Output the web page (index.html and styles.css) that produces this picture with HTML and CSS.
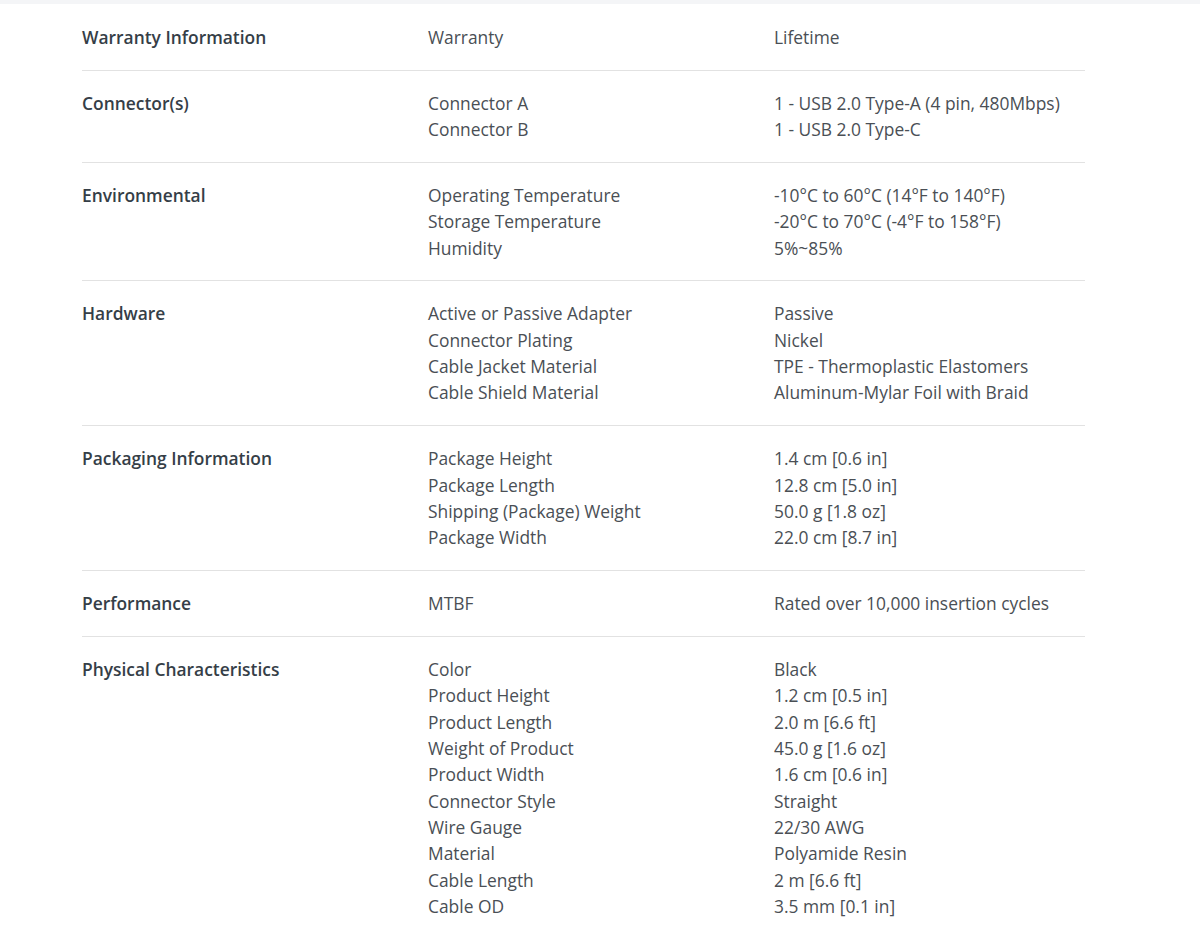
FILE: index.html
```html
<!DOCTYPE html>
<html>
<head>
<meta charset="utf-8">
<link rel="stylesheet" href="styles.css">
</head>
<body>
<div class="topband"></div>
<div class="specs">
  <div class="row">
    <div class="group">Warranty Information</div>
    <div class="names"><div>Warranty</div></div>
    <div class="vals"><div>Lifetime</div></div>
  </div>
  <div class="row">
    <div class="group">Connector(s)</div>
    <div class="names"><div>Connector A</div><div>Connector B</div></div>
    <div class="vals"><div>1 - USB 2.0 Type-A (4 pin, 480Mbps)</div><div>1 - USB 2.0 Type-C</div></div>
  </div>
  <div class="row">
    <div class="group">Environmental</div>
    <div class="names"><div>Operating Temperature</div><div>Storage Temperature</div><div>Humidity</div></div>
    <div class="vals"><div>-10°C to 60°C (14°F to 140°F)</div><div>-20°C to 70°C (-4°F to 158°F)</div><div>5%~85%</div></div>
  </div>
  <div class="row">
    <div class="group">Hardware</div>
    <div class="names"><div>Active or Passive Adapter</div><div>Connector Plating</div><div>Cable Jacket Material</div><div>Cable Shield Material</div></div>
    <div class="vals"><div>Passive</div><div>Nickel</div><div>TPE - Thermoplastic Elastomers</div><div>Aluminum-Mylar Foil with Braid</div></div>
  </div>
  <div class="row">
    <div class="group">Packaging Information</div>
    <div class="names"><div>Package Height</div><div>Package Length</div><div>Shipping (Package) Weight</div><div>Package Width</div></div>
    <div class="vals"><div>1.4 cm [0.6 in]</div><div>12.8 cm [5.0 in]</div><div>50.0 g [1.8 oz]</div><div>22.0 cm [8.7 in]</div></div>
  </div>
  <div class="row">
    <div class="group">Performance</div>
    <div class="names"><div>MTBF</div></div>
    <div class="vals"><div>Rated over 10,000 insertion cycles</div></div>
  </div>
  <div class="row last">
    <div class="group">Physical Characteristics</div>
    <div class="names"><div>Color</div><div>Product Height</div><div>Product Length</div><div>Weight of Product</div><div>Product Width</div><div>Connector Style</div><div>Wire Gauge</div><div>Material</div><div>Cable Length</div><div>Cable OD</div></div>
    <div class="vals"><div>Black</div><div>1.2 cm [0.5 in]</div><div>2.0 m [6.6 ft]</div><div>45.0 g [1.6 oz]</div><div>1.6 cm [0.6 in]</div><div>Straight</div><div>22/30 AWG</div><div>Polyamide Resin</div><div>2 m [6.6 ft]</div><div>3.5 mm [0.1 in]</div></div>
  </div>
</div>
</body>
</html>
```

FILE: styles.css
```css
html, body {
  margin: 0;
  padding: 0;
  background: #ffffff;
}
body {
  font-family: "Open Sans", "Liberation Sans", sans-serif;
  font-size: 17.4px;
  line-height: 26.33px;
  color: #4a4f55;
}
.topband {
  height: 4px;
  background: #f4f5f7;
}
.specs {
  width: 1003px;
  margin: 1px 0 0 82px;
}
.row {
  display: grid;
  grid-template-columns: 346px 346px 1fr;
  padding: 19px 0 19.5px;
  border-bottom: 1px solid #e2e2e2;
}
.row.last {
  border-bottom: none;
}
.group {
  font-weight: 600;
  color: #353e47;
}
```
